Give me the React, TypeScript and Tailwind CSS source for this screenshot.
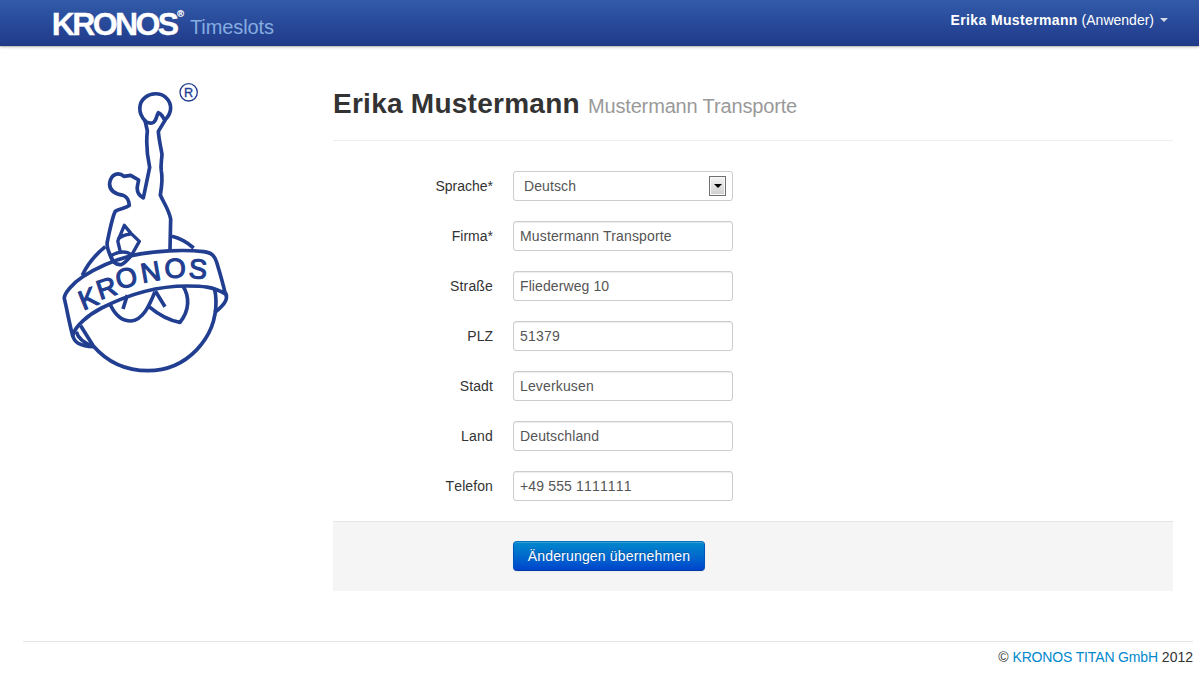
import React from "react";

const fields = [
  { label: "Firma*", value: "Mustermann Transporte", spacing: "tracking-[0.15px]", labelSpacing: "" },
  { label: "Straße", value: "Fliederweg 10", spacing: "tracking-[0.1px]", labelSpacing: "tracking-[0.15px]" },
  { label: "PLZ", value: "51379", spacing: "tracking-[0.2px]", labelSpacing: "" },
  { label: "Stadt", value: "Leverkusen", spacing: "tracking-[0.15px]", labelSpacing: "tracking-[0.1px]" },
  { label: "Land", value: "Deutschland", spacing: "tracking-[0.12px]", labelSpacing: "tracking-[0.2px]" },
  { label: "Telefon", value: "+49 555 1111111", spacing: "[font-kerning:none] tracking-[0.15px]", labelSpacing: "[font-kerning:none] tracking-[0.1px]" },
];

const bannerLetters = [
  { c: "K", x: 114, y: 234, r: -22 },
  { c: "R", x: 169, y: 203, r: -18 },
  { c: "O", x: 229, y: 173, r: -14 },
  { c: "N", x: 302, y: 155, r: -10 },
  { c: "O", x: 375, y: 144, r: -3 },
  { c: "S", x: 444, y: 146, r: 4 },
];

function Statue() {
  return (
    <svg width="190" height="305" viewBox="0 0 570 915" fill="none" stroke="#213e90" strokeWidth="11" strokeLinejoin="round" aria-label="Kronos">
      <circle cx="416" cy="52" r="26" strokeWidth="4" />
      <text x="416" y="66" textAnchor="middle" fontSize="38" fill="#213e90" stroke="#213e90" strokeWidth="1" fontFamily="Liberation Sans, Arial, sans-serif">R</text>
      {/* raised arm and orb */}
      <path d="M285 137 C263 113 265 82 287 66 C304 53 331 53 347 67 C368 86 367 115 343 136" />
      <path d="M285 135 L292 168 C288 203 291 240 299 277 L280 369 C266 361 260 351 262 335 L266 315 L242 301 L222 304 C205 289 183 298 179 324 C177 346 192 357 220 361 C232 366 237 376 238 391 C228 400 208 400 196 409 C188 422 182 452 172 500 C167 522 183 540 188 558" />
      <path d="M283 136 C292 145 304 145 311 142 C320 136 319 122 325 113 C337 116 339 130 345 136 L325 169 C327 195 332 215 336 238 C335 258 331 270 334 288 C339 312 335 335 331 360 C340 382 356 402 362 432 L360 525" />
      <g transform="translate(0 435)">
        <path d="M166 80 Q118 119 97 166 M366 49 Q400 57 431 84" />
        <path d="M180 104 C188 129 201 135 213 134 Q224 131 244 106" />
        <path d="M203 64 L223 16 L243 40 L268 64 L245 105 C224 88 202 96 181 108 M203 62 L211 96 M203 58 Q219 44 242 42" strokeWidth="10" />
        {/* globe and tunic folds */}
        <path d="M92 317 L130 378 C174 429 230 452 294 452 C410 452 499 355 498 244 Q498 224 493 205" />
        <path d="M181 254 C196 286 218 303 243 303 C279 300 299 255 315 215 M232 225 L219 267 M316 213 L345 260 M296 259 C328 286 361 302 390 307 C419 271 419 230 399 198" />
        {/* banner */}
        <path d="M68 347 C57 306 51 268 43 236 C41 220 71 188 97 171 C148 137 198 119 244 107 C315 92 401 88 461 95 C485 98 494 107 500 127 C511 163 519 191 526 222 C490 199 454 198 411 198 C319 198 233 224 155 264 C114 285 75 318 68 347 Z" />
        <path d="M68 345 C72 369 91 379 130 380 C102 369 84 357 79 335 M526 217 C538 240 517 259 494 278" />
        {bannerLetters.map((l, i) => (
          <text key={i} transform={`translate(${l.x} ${l.y}) rotate(${l.r})`} y="29" textAnchor="middle" fontSize="82" fill="#213e90" strokeWidth="3.5" fontFamily="Liberation Sans, Arial, sans-serif">{l.c}</text>
        ))}
      </g>
    </svg>
  );
}

export default function App() {
  return (
    <div className="h-[684px] w-full overflow-hidden bg-white font-['Liberation_Sans',Arial,sans-serif] text-[14px] leading-5 text-[#333]">
      <header className="flex h-[46px] items-start justify-between border-b border-[#213782] bg-linear-to-b from-[#315ba9] to-[#213a8a] pr-[31px] pl-[50px] shadow-[0_1px_3px_rgba(0,0,0,0.25),0_1px_0_rgba(0,0,0,0.1)]">
        <div className="flex items-start">
          <svg width="140" height="45" viewBox="0 0 140 45" fill="white" stroke="white" strokeWidth="0.3" fontFamily="Liberation Sans, Arial, sans-serif" aria-label="Kronos">
            <text x="1.8" y="35.3" fontSize="32" fontWeight="700" textLength="127.4" lengthAdjust="spacing">KRONOS</text>
            <text x="127.3" y="17" fontSize="9">®</text>
          </svg>
          <span className="pt-[17px] text-[20px] tracking-[-0.1px] text-[#85ade0]">Timeslots</span>
        </div>
        <div className="flex items-center pt-[10px] text-white">
          <span><b className="tracking-[0.36px]">Erika Mustermann</b> (Anwender)</span>
          <span className="ml-[6px] border-x-4 border-t-4 border-x-transparent border-t-[#d5dbea]" />
        </div>
      </header>

      <div className="flex">
        <aside className="w-[333px] shrink-0 pt-[29px] pl-[50px]"><Statue /></aside>
        <main className="w-[840px] pt-[40px]">
          <div className="flex h-[55px] items-baseline border-b border-[#eee]">
            <h1 className="text-[28px] leading-[36px] font-bold tracking-[0.26px]">Erika Mustermann</h1>
            <span className="ml-[8px] text-[20px] tracking-[-0.15px] text-[#999]">Mustermann Transporte</span>
          </div>
          <form className="pt-[30px]" onSubmit={(e) => e.preventDefault()}>
            <div className="flex flex-col gap-5">
              <div className="flex h-[30px] items-center">
                <label className="w-[160px] text-right">Sprache*</label>
                <div className="ml-5 flex h-[30px] w-[220px] items-center justify-between rounded-[3px] border border-[#ccc] pr-[6px] pl-[10px] tracking-[0.1px] text-[#555]">
                  Deutsch
                  <span className="flex h-5 w-[17px] items-center justify-center border border-[#707070] bg-linear-to-b from-[#f4f4f4] to-[#cfcfcf] shadow-[inset_0_0_0_1px_#f8f8f8]">
                    <span className="border-x-4 border-t-4 border-x-transparent border-t-black" />
                  </span>
                </div>
              </div>
              {fields.map((f) => (
                <div key={f.label} className="flex h-[30px] items-center">
                  <label className={`w-[160px] text-right ${f.labelSpacing}`}>{f.label}</label>
                  <input defaultValue={f.value} className={`ml-5 h-[30px] w-[220px] rounded-[3px] border border-[#ccc] px-[6px] text-[#555] shadow-[inset_0_1px_1px_rgba(0,0,0,0.075)] outline-none ${f.spacing}`} />
                </div>
              ))}
            </div>
            <div className="mt-5 h-[70px] border-t border-[#e5e5e5] bg-[#f5f5f5] pt-[19px] pl-[180px]">
              <button className="block h-[30px] w-[192px] rounded-[4px] border border-[#0055b8] border-t-[#0070bd] border-b-[#003ba8] bg-linear-to-b from-[#0088cc] to-[#0044cc] tracking-[0.18px] whitespace-nowrap text-white shadow-[inset_0_1px_0_rgba(255,255,255,0.2),0_1px_2px_rgba(0,0,0,0.05)] [text-shadow:0_-1px_0_rgba(0,0,0,0.25)]">Änderungen übernehmen</button>
            </div>
          </form>
        </main>
      </div>
      <footer className="mt-[50px] ml-[23px] w-[1170px] border-t border-[#e5e5e5] pt-[5px] text-right">
        © <a className="tracking-[-0.15px] text-[#0088cc]">KRONOS TITAN GmbH</a> 2012
      </footer>
    </div>
  );
}
